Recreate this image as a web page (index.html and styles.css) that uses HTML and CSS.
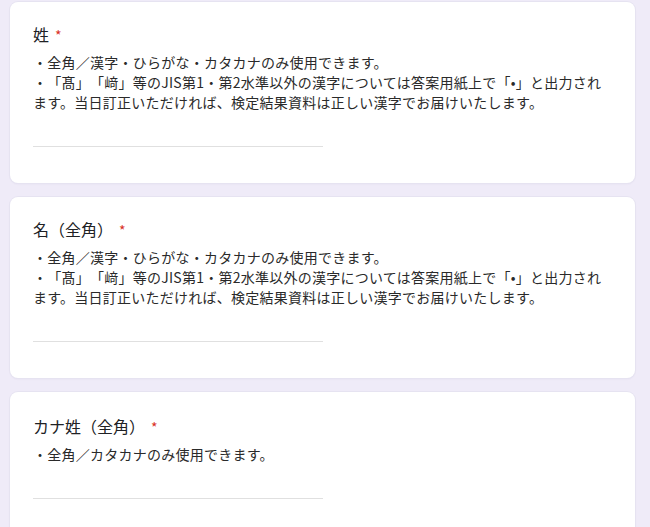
FILE: index.html
```html
<!DOCTYPE html>
<html lang="ja">
<head>
    <meta charset="UTF-8">
    <meta name="viewport" content="width=device-width, initial-scale=1.0">
    <title>申込フォーム</title>
    <link rel="stylesheet" href="styles.css">
</head>
<body>

<div class="form">
    <div class="question">
        <div class="q-title">姓<span class="required">*</span></div>
        <div class="q-desc">
            ・全角／漢字・ひらがな・カタカナのみ使用できます。<br>
            ・「髙」「﨑」等のJIS第1・第2水準以外の漢字については答案用紙上で「•」と出力されます。当日訂正いただければ、検定結果資料は正しい漢字でお届けいたします。
        </div>
        <div class="q-input"><input type="text" aria-label="姓"></div>
    </div>

    <div class="question">
        <div class="q-title">名（全角）<span class="required">*</span></div>
        <div class="q-desc">
            ・全角／漢字・ひらがな・カタカナのみ使用できます。<br>
            ・「髙」「﨑」等のJIS第1・第2水準以外の漢字については答案用紙上で「•」と出力されます。当日訂正いただければ、検定結果資料は正しい漢字でお届けいたします。
        </div>
        <div class="q-input"><input type="text" aria-label="名"></div>
    </div>

    <div class="question">
        <div class="q-title">カナ姓（全角）<span class="required">*</span></div>
        <div class="q-desc">
            ・全角／カタカナのみ使用できます。
        </div>
        <div class="q-input"><input type="text" aria-label="カナ姓"></div>
    </div>
</div>

</body>
</html>
```

FILE: styles.css
```css
body {
    margin: 0;
    padding: 0;
    background-color: #efebf8;
    font-family: "Noto Sans CJK JP", "Noto Sans", sans-serif;
    color: #202124;
    overflow: hidden;
    text-spacing-trim: space-all;
}

.form {
    display: flex;
    flex-direction: column;
    gap: 14px;
    padding: 2px 15px 0 10px;
    height: 525px;
}

.question {
    background-color: #fff;
    border-radius: 8px;
    box-shadow: 0 0 0 1px #e6e3f1, 0 1px 2px rgba(60, 50, 110, 0.08);
    padding: 20px 21px 34px 23px;
    height: 127px;
    flex-shrink: 0;
}

.question:last-child {
    padding-top: 22px;
}

.q-title {
    font-size: 16px;
    line-height: 24px;
}

.required {
    color: #d93025;
    font-size: 14px;
    padding-left: 6px;
}

.q-desc {
    margin-top: 5px;
    font-size: 14px;
    line-height: 20px;
    letter-spacing: 0.25px;
    color: #2a2a2a;
}

.q-input {
    margin-top: 33px;
    width: 290px;
}

.q-input input {
    display: block;
    width: 100%;
    height: 1px;
    padding: 0;
    border: none;
    border-bottom: 1px solid #e0e0e0;
    outline: none;
    background: transparent;
}
```
